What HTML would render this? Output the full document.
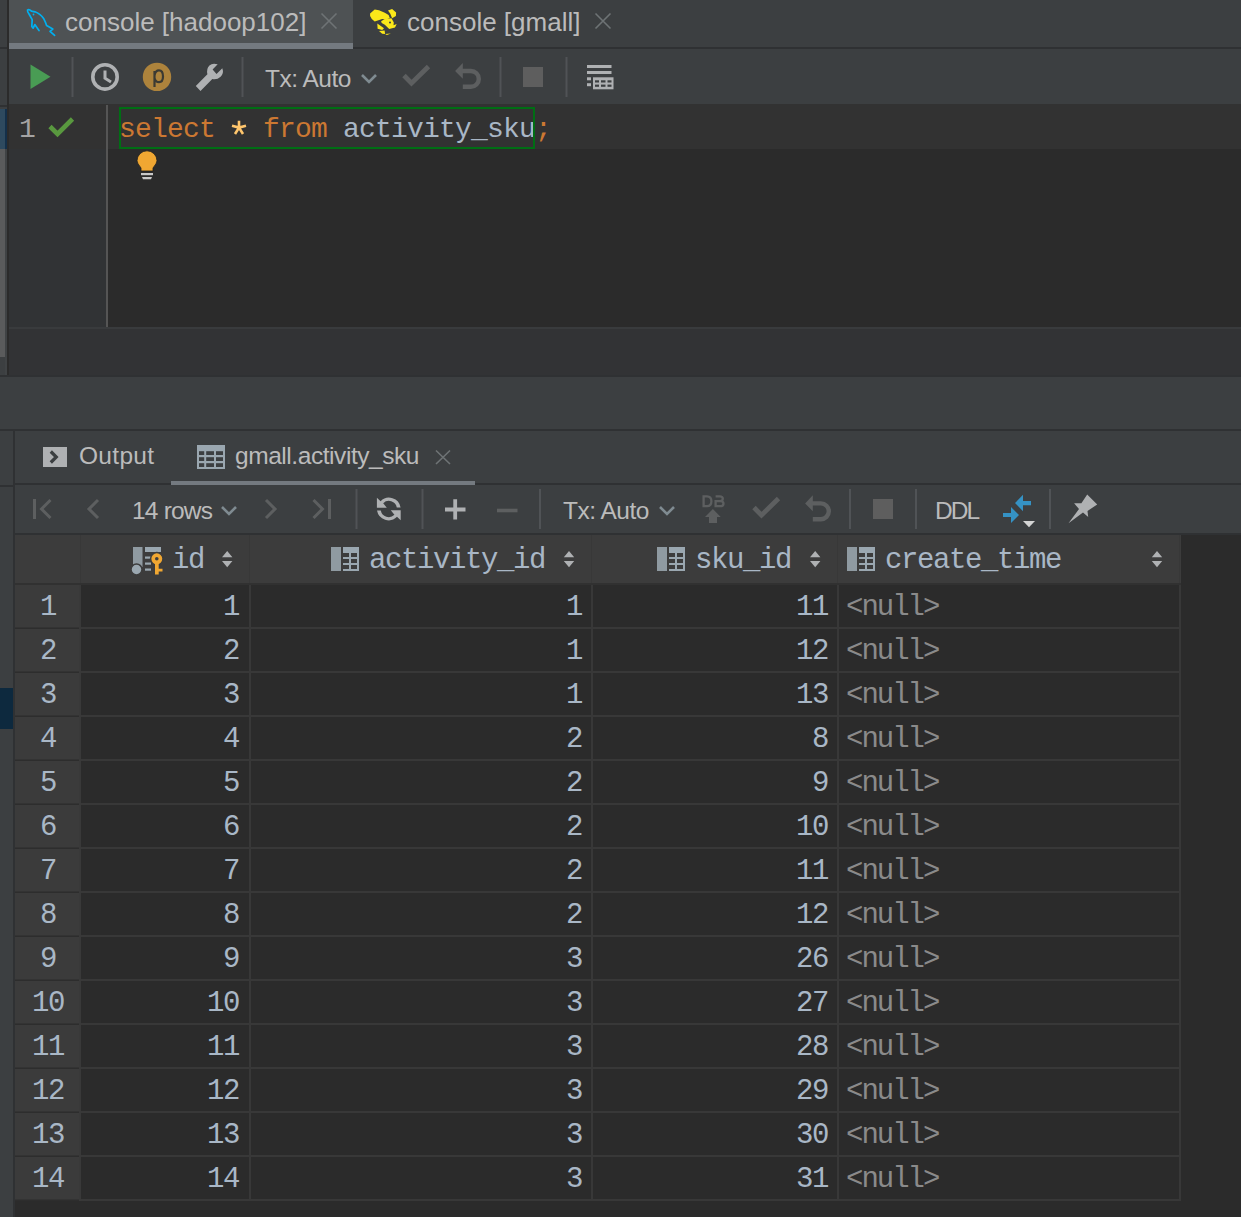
<!DOCTYPE html>
<html><head><meta charset="utf-8">
<style>
*{margin:0;padding:0;box-sizing:border-box}
html,body{width:1241px;height:1217px;overflow:hidden;background:#2b2b2b}
body{position:relative;font-family:"Liberation Sans",sans-serif;color:#bbbbbb}
.a{position:absolute}
.sans{font-family:"Liberation Sans",sans-serif;white-space:pre}
.mono{font-family:"Liberation Mono",monospace;white-space:pre}
.sep{position:absolute;width:2px;background:#515456}
</style></head><body>

<!-- ===== top tab bar ===== -->
<div class="a" style="left:0;top:0;width:1241px;height:50px;background:#3c3f41"></div>
<div class="a" style="left:9px;top:0;width:344px;height:43px;background:#4e5254"></div>
<div class="a" style="left:9px;top:43px;width:344px;height:6px;background:#747a80"></div>
<div class="a" style="left:353px;top:47px;width:888px;height:2px;background:#2f3133"></div>
<div class="a" style="left:0;top:47px;width:7px;height:2px;background:#2f3133"></div>
<div class="a" style="left:7px;top:0;width:2px;height:377px;background:#2b2b2b"></div>

<!-- ===== toolbar ===== -->
<div class="a" style="left:9px;top:49px;width:1232px;height:56px;background:#3c3f41"></div>
<div class="a" style="left:9px;top:104px;width:1232px;height:1px;background:#323232"></div>

<!-- ===== editor ===== -->
<div class="a" style="left:9px;top:105px;width:97px;height:222px;background:#313335"></div>
<div class="a" style="left:108px;top:105px;width:1133px;height:222px;background:#2b2b2b"></div>
<div class="a" style="left:9px;top:105px;width:1232px;height:44px;background:#323232"></div>
<div class="a" style="left:106px;top:105px;width:2px;height:222px;background:#555555"></div>
<!-- left strip markers -->
<div class="a" style="left:0;top:49px;width:7px;height:328px;background:#3c3f41"></div>
<div class="a" style="left:0;top:105px;width:7px;height:2px;background:#2f3133"></div>
<div class="a" style="left:0;top:109px;width:5px;height:40px;background:#2e4a5f"></div>
<div class="a" style="left:5px;top:109px;width:2px;height:40px;background:#14304a"></div>
<div class="a" style="left:0;top:149px;width:5px;height:208px;background:#5a5b5c"></div>
<div class="a" style="left:5px;top:149px;width:2px;height:226px;background:#404345"></div>

<div class="a" style="left:9px;top:327px;width:1232px;height:2px;background:#393b3d"></div>
<div class="a" style="left:9px;top:329px;width:1232px;height:46px;background:#323335"></div>
<div class="a" style="left:0;top:375px;width:1241px;height:2px;background:#2f3133"></div>

<!-- ===== panel gap ===== -->
<div class="a" style="left:0;top:377px;width:1241px;height:52px;background:#3c3f41"></div>
<div class="a" style="left:0;top:429px;width:1241px;height:2px;background:#2f3133"></div>

<!-- ===== results ===== -->
<div class="a" style="left:0;top:431px;width:1241px;height:104px;background:#3c3f41"></div>
<div class="a" style="left:13px;top:431px;width:2px;height:786px;background:#2f3133"></div>
<div class="a" style="left:0;top:431px;width:13px;height:786px;background:#3c3f41"></div>
<div class="a" style="left:0;top:688px;width:13px;height:41px;background:#0d293e"></div>
<div class="a" style="left:0;top:485px;width:13px;height:2px;background:#2f3133"></div>
<div class="a" style="left:15px;top:483px;width:156px;height:2px;background:#2f3133"></div>
<div class="a" style="left:171px;top:481px;width:304px;height:4px;background:#747a80"></div>
<div class="a" style="left:475px;top:483px;width:766px;height:2px;background:#2f3133"></div>
<div class="a" style="left:15px;top:533px;width:1226px;height:2px;background:#2f3133"></div>

<!-- table -->
<div class="a" style="left:15px;top:535px;width:1226px;height:682px;background:#2b2b2b"></div>

<div class="a" style="left:15px;top:535px;width:1166px;height:48px;background:#3c3c3c"></div>
<div class="a" style="left:15px;top:585px;width:66px;height:616px;background:#3b3b3b"></div>
<div class="a" style="left:15px;top:583px;width:1166px;height:2px;background:#313131"></div>
<div class="a" style="left:81px;top:627px;width:1100px;height:2px;background:#383838"></div>
<div class="a" style="left:15px;top:627px;width:66px;height:2px;background:#333333"></div>
<div class="a" style="left:15px;top:627.5px;width:66px;height:1px;background:#2d2d2d"></div>
<div class="a" style="left:81px;top:671px;width:1100px;height:2px;background:#383838"></div>
<div class="a" style="left:15px;top:671px;width:66px;height:2px;background:#333333"></div>
<div class="a" style="left:15px;top:671.5px;width:66px;height:1px;background:#2d2d2d"></div>
<div class="a" style="left:81px;top:715px;width:1100px;height:2px;background:#383838"></div>
<div class="a" style="left:15px;top:715px;width:66px;height:2px;background:#333333"></div>
<div class="a" style="left:15px;top:715.5px;width:66px;height:1px;background:#2d2d2d"></div>
<div class="a" style="left:81px;top:759px;width:1100px;height:2px;background:#383838"></div>
<div class="a" style="left:15px;top:759px;width:66px;height:2px;background:#333333"></div>
<div class="a" style="left:15px;top:759.5px;width:66px;height:1px;background:#2d2d2d"></div>
<div class="a" style="left:81px;top:803px;width:1100px;height:2px;background:#383838"></div>
<div class="a" style="left:15px;top:803px;width:66px;height:2px;background:#333333"></div>
<div class="a" style="left:15px;top:803.5px;width:66px;height:1px;background:#2d2d2d"></div>
<div class="a" style="left:81px;top:847px;width:1100px;height:2px;background:#383838"></div>
<div class="a" style="left:15px;top:847px;width:66px;height:2px;background:#333333"></div>
<div class="a" style="left:15px;top:847.5px;width:66px;height:1px;background:#2d2d2d"></div>
<div class="a" style="left:81px;top:891px;width:1100px;height:2px;background:#383838"></div>
<div class="a" style="left:15px;top:891px;width:66px;height:2px;background:#333333"></div>
<div class="a" style="left:15px;top:891.5px;width:66px;height:1px;background:#2d2d2d"></div>
<div class="a" style="left:81px;top:935px;width:1100px;height:2px;background:#383838"></div>
<div class="a" style="left:15px;top:935px;width:66px;height:2px;background:#333333"></div>
<div class="a" style="left:15px;top:935.5px;width:66px;height:1px;background:#2d2d2d"></div>
<div class="a" style="left:81px;top:979px;width:1100px;height:2px;background:#383838"></div>
<div class="a" style="left:15px;top:979px;width:66px;height:2px;background:#333333"></div>
<div class="a" style="left:15px;top:979.5px;width:66px;height:1px;background:#2d2d2d"></div>
<div class="a" style="left:81px;top:1023px;width:1100px;height:2px;background:#383838"></div>
<div class="a" style="left:15px;top:1023px;width:66px;height:2px;background:#333333"></div>
<div class="a" style="left:15px;top:1023.5px;width:66px;height:1px;background:#2d2d2d"></div>
<div class="a" style="left:81px;top:1067px;width:1100px;height:2px;background:#383838"></div>
<div class="a" style="left:15px;top:1067px;width:66px;height:2px;background:#333333"></div>
<div class="a" style="left:15px;top:1067.5px;width:66px;height:1px;background:#2d2d2d"></div>
<div class="a" style="left:81px;top:1111px;width:1100px;height:2px;background:#383838"></div>
<div class="a" style="left:15px;top:1111px;width:66px;height:2px;background:#333333"></div>
<div class="a" style="left:15px;top:1111.5px;width:66px;height:1px;background:#2d2d2d"></div>
<div class="a" style="left:81px;top:1155px;width:1100px;height:2px;background:#383838"></div>
<div class="a" style="left:15px;top:1155px;width:66px;height:2px;background:#333333"></div>
<div class="a" style="left:15px;top:1155.5px;width:66px;height:1px;background:#2d2d2d"></div>
<div class="a" style="left:81px;top:1199px;width:1100px;height:2px;background:#383838"></div>
<div class="a" style="left:15px;top:1199px;width:66px;height:2px;background:#333333"></div>
<div class="a" style="left:15px;top:1199.5px;width:66px;height:1px;background:#2d2d2d"></div>
<div class="a" style="left:249px;top:585px;width:2px;height:616px;background:#383838"></div>
<div class="a" style="left:591px;top:585px;width:2px;height:616px;background:#383838"></div>
<div class="a" style="left:837px;top:585px;width:2px;height:616px;background:#383838"></div>
<div class="a" style="left:1179px;top:585px;width:2px;height:616px;background:#383838"></div>
<div class="a" style="left:79px;top:585px;width:2px;height:616px;background:#393939"></div>
<div class="a" style="left:80px;top:535px;width:1px;height:48px;background:#383838"></div>
<div class="a" style="left:249px;top:535px;width:1px;height:48px;background:#383838"></div>
<div class="a" style="left:591px;top:535px;width:1px;height:48px;background:#383838"></div>
<div class="a" style="left:837px;top:535px;width:1px;height:48px;background:#383838"></div>
<div class="a" style="left:1179px;top:535px;width:1px;height:48px;background:#383838"></div>
<div class="a mono" style="left:15px;top:588.27px;width:66px;text-align:center;font-size:29px;letter-spacing:-1.4px;line-height:40px;color:#a9b7c6">1</div>
<div class="a mono" style="left:81px;top:588.27px;width:158px;text-align:right;font-size:29px;letter-spacing:-1.4px;line-height:40px;color:#a9b7c6">1</div>
<div class="a mono" style="left:251px;top:588.27px;width:331px;text-align:right;font-size:29px;letter-spacing:-1.4px;line-height:40px;color:#a9b7c6">1</div>
<div class="a mono" style="left:593px;top:588.27px;width:235px;text-align:right;font-size:29px;letter-spacing:-1.4px;line-height:40px;color:#a9b7c6">11</div>
<div class="a mono" style="left:846px;top:588.27px;width:300px;font-size:29px;letter-spacing:-1.4px;line-height:40px;color:#a9b7c6;letter-spacing:-2px;color:#8a8a8a">&lt;null&gt;</div>
<div class="a mono" style="left:15px;top:632.27px;width:66px;text-align:center;font-size:29px;letter-spacing:-1.4px;line-height:40px;color:#a9b7c6">2</div>
<div class="a mono" style="left:81px;top:632.27px;width:158px;text-align:right;font-size:29px;letter-spacing:-1.4px;line-height:40px;color:#a9b7c6">2</div>
<div class="a mono" style="left:251px;top:632.27px;width:331px;text-align:right;font-size:29px;letter-spacing:-1.4px;line-height:40px;color:#a9b7c6">1</div>
<div class="a mono" style="left:593px;top:632.27px;width:235px;text-align:right;font-size:29px;letter-spacing:-1.4px;line-height:40px;color:#a9b7c6">12</div>
<div class="a mono" style="left:846px;top:632.27px;width:300px;font-size:29px;letter-spacing:-1.4px;line-height:40px;color:#a9b7c6;letter-spacing:-2px;color:#8a8a8a">&lt;null&gt;</div>
<div class="a mono" style="left:15px;top:676.27px;width:66px;text-align:center;font-size:29px;letter-spacing:-1.4px;line-height:40px;color:#a9b7c6">3</div>
<div class="a mono" style="left:81px;top:676.27px;width:158px;text-align:right;font-size:29px;letter-spacing:-1.4px;line-height:40px;color:#a9b7c6">3</div>
<div class="a mono" style="left:251px;top:676.27px;width:331px;text-align:right;font-size:29px;letter-spacing:-1.4px;line-height:40px;color:#a9b7c6">1</div>
<div class="a mono" style="left:593px;top:676.27px;width:235px;text-align:right;font-size:29px;letter-spacing:-1.4px;line-height:40px;color:#a9b7c6">13</div>
<div class="a mono" style="left:846px;top:676.27px;width:300px;font-size:29px;letter-spacing:-1.4px;line-height:40px;color:#a9b7c6;letter-spacing:-2px;color:#8a8a8a">&lt;null&gt;</div>
<div class="a mono" style="left:15px;top:720.27px;width:66px;text-align:center;font-size:29px;letter-spacing:-1.4px;line-height:40px;color:#a9b7c6">4</div>
<div class="a mono" style="left:81px;top:720.27px;width:158px;text-align:right;font-size:29px;letter-spacing:-1.4px;line-height:40px;color:#a9b7c6">4</div>
<div class="a mono" style="left:251px;top:720.27px;width:331px;text-align:right;font-size:29px;letter-spacing:-1.4px;line-height:40px;color:#a9b7c6">2</div>
<div class="a mono" style="left:593px;top:720.27px;width:235px;text-align:right;font-size:29px;letter-spacing:-1.4px;line-height:40px;color:#a9b7c6">8</div>
<div class="a mono" style="left:846px;top:720.27px;width:300px;font-size:29px;letter-spacing:-1.4px;line-height:40px;color:#a9b7c6;letter-spacing:-2px;color:#8a8a8a">&lt;null&gt;</div>
<div class="a mono" style="left:15px;top:764.27px;width:66px;text-align:center;font-size:29px;letter-spacing:-1.4px;line-height:40px;color:#a9b7c6">5</div>
<div class="a mono" style="left:81px;top:764.27px;width:158px;text-align:right;font-size:29px;letter-spacing:-1.4px;line-height:40px;color:#a9b7c6">5</div>
<div class="a mono" style="left:251px;top:764.27px;width:331px;text-align:right;font-size:29px;letter-spacing:-1.4px;line-height:40px;color:#a9b7c6">2</div>
<div class="a mono" style="left:593px;top:764.27px;width:235px;text-align:right;font-size:29px;letter-spacing:-1.4px;line-height:40px;color:#a9b7c6">9</div>
<div class="a mono" style="left:846px;top:764.27px;width:300px;font-size:29px;letter-spacing:-1.4px;line-height:40px;color:#a9b7c6;letter-spacing:-2px;color:#8a8a8a">&lt;null&gt;</div>
<div class="a mono" style="left:15px;top:808.27px;width:66px;text-align:center;font-size:29px;letter-spacing:-1.4px;line-height:40px;color:#a9b7c6">6</div>
<div class="a mono" style="left:81px;top:808.27px;width:158px;text-align:right;font-size:29px;letter-spacing:-1.4px;line-height:40px;color:#a9b7c6">6</div>
<div class="a mono" style="left:251px;top:808.27px;width:331px;text-align:right;font-size:29px;letter-spacing:-1.4px;line-height:40px;color:#a9b7c6">2</div>
<div class="a mono" style="left:593px;top:808.27px;width:235px;text-align:right;font-size:29px;letter-spacing:-1.4px;line-height:40px;color:#a9b7c6">10</div>
<div class="a mono" style="left:846px;top:808.27px;width:300px;font-size:29px;letter-spacing:-1.4px;line-height:40px;color:#a9b7c6;letter-spacing:-2px;color:#8a8a8a">&lt;null&gt;</div>
<div class="a mono" style="left:15px;top:852.27px;width:66px;text-align:center;font-size:29px;letter-spacing:-1.4px;line-height:40px;color:#a9b7c6">7</div>
<div class="a mono" style="left:81px;top:852.27px;width:158px;text-align:right;font-size:29px;letter-spacing:-1.4px;line-height:40px;color:#a9b7c6">7</div>
<div class="a mono" style="left:251px;top:852.27px;width:331px;text-align:right;font-size:29px;letter-spacing:-1.4px;line-height:40px;color:#a9b7c6">2</div>
<div class="a mono" style="left:593px;top:852.27px;width:235px;text-align:right;font-size:29px;letter-spacing:-1.4px;line-height:40px;color:#a9b7c6">11</div>
<div class="a mono" style="left:846px;top:852.27px;width:300px;font-size:29px;letter-spacing:-1.4px;line-height:40px;color:#a9b7c6;letter-spacing:-2px;color:#8a8a8a">&lt;null&gt;</div>
<div class="a mono" style="left:15px;top:896.27px;width:66px;text-align:center;font-size:29px;letter-spacing:-1.4px;line-height:40px;color:#a9b7c6">8</div>
<div class="a mono" style="left:81px;top:896.27px;width:158px;text-align:right;font-size:29px;letter-spacing:-1.4px;line-height:40px;color:#a9b7c6">8</div>
<div class="a mono" style="left:251px;top:896.27px;width:331px;text-align:right;font-size:29px;letter-spacing:-1.4px;line-height:40px;color:#a9b7c6">2</div>
<div class="a mono" style="left:593px;top:896.27px;width:235px;text-align:right;font-size:29px;letter-spacing:-1.4px;line-height:40px;color:#a9b7c6">12</div>
<div class="a mono" style="left:846px;top:896.27px;width:300px;font-size:29px;letter-spacing:-1.4px;line-height:40px;color:#a9b7c6;letter-spacing:-2px;color:#8a8a8a">&lt;null&gt;</div>
<div class="a mono" style="left:15px;top:940.27px;width:66px;text-align:center;font-size:29px;letter-spacing:-1.4px;line-height:40px;color:#a9b7c6">9</div>
<div class="a mono" style="left:81px;top:940.27px;width:158px;text-align:right;font-size:29px;letter-spacing:-1.4px;line-height:40px;color:#a9b7c6">9</div>
<div class="a mono" style="left:251px;top:940.27px;width:331px;text-align:right;font-size:29px;letter-spacing:-1.4px;line-height:40px;color:#a9b7c6">3</div>
<div class="a mono" style="left:593px;top:940.27px;width:235px;text-align:right;font-size:29px;letter-spacing:-1.4px;line-height:40px;color:#a9b7c6">26</div>
<div class="a mono" style="left:846px;top:940.27px;width:300px;font-size:29px;letter-spacing:-1.4px;line-height:40px;color:#a9b7c6;letter-spacing:-2px;color:#8a8a8a">&lt;null&gt;</div>
<div class="a mono" style="left:15px;top:984.27px;width:66px;text-align:center;font-size:29px;letter-spacing:-1.4px;line-height:40px;color:#a9b7c6">10</div>
<div class="a mono" style="left:81px;top:984.27px;width:158px;text-align:right;font-size:29px;letter-spacing:-1.4px;line-height:40px;color:#a9b7c6">10</div>
<div class="a mono" style="left:251px;top:984.27px;width:331px;text-align:right;font-size:29px;letter-spacing:-1.4px;line-height:40px;color:#a9b7c6">3</div>
<div class="a mono" style="left:593px;top:984.27px;width:235px;text-align:right;font-size:29px;letter-spacing:-1.4px;line-height:40px;color:#a9b7c6">27</div>
<div class="a mono" style="left:846px;top:984.27px;width:300px;font-size:29px;letter-spacing:-1.4px;line-height:40px;color:#a9b7c6;letter-spacing:-2px;color:#8a8a8a">&lt;null&gt;</div>
<div class="a mono" style="left:15px;top:1028.27px;width:66px;text-align:center;font-size:29px;letter-spacing:-1.4px;line-height:40px;color:#a9b7c6">11</div>
<div class="a mono" style="left:81px;top:1028.27px;width:158px;text-align:right;font-size:29px;letter-spacing:-1.4px;line-height:40px;color:#a9b7c6">11</div>
<div class="a mono" style="left:251px;top:1028.27px;width:331px;text-align:right;font-size:29px;letter-spacing:-1.4px;line-height:40px;color:#a9b7c6">3</div>
<div class="a mono" style="left:593px;top:1028.27px;width:235px;text-align:right;font-size:29px;letter-spacing:-1.4px;line-height:40px;color:#a9b7c6">28</div>
<div class="a mono" style="left:846px;top:1028.27px;width:300px;font-size:29px;letter-spacing:-1.4px;line-height:40px;color:#a9b7c6;letter-spacing:-2px;color:#8a8a8a">&lt;null&gt;</div>
<div class="a mono" style="left:15px;top:1072.27px;width:66px;text-align:center;font-size:29px;letter-spacing:-1.4px;line-height:40px;color:#a9b7c6">12</div>
<div class="a mono" style="left:81px;top:1072.27px;width:158px;text-align:right;font-size:29px;letter-spacing:-1.4px;line-height:40px;color:#a9b7c6">12</div>
<div class="a mono" style="left:251px;top:1072.27px;width:331px;text-align:right;font-size:29px;letter-spacing:-1.4px;line-height:40px;color:#a9b7c6">3</div>
<div class="a mono" style="left:593px;top:1072.27px;width:235px;text-align:right;font-size:29px;letter-spacing:-1.4px;line-height:40px;color:#a9b7c6">29</div>
<div class="a mono" style="left:846px;top:1072.27px;width:300px;font-size:29px;letter-spacing:-1.4px;line-height:40px;color:#a9b7c6;letter-spacing:-2px;color:#8a8a8a">&lt;null&gt;</div>
<div class="a mono" style="left:15px;top:1116.27px;width:66px;text-align:center;font-size:29px;letter-spacing:-1.4px;line-height:40px;color:#a9b7c6">13</div>
<div class="a mono" style="left:81px;top:1116.27px;width:158px;text-align:right;font-size:29px;letter-spacing:-1.4px;line-height:40px;color:#a9b7c6">13</div>
<div class="a mono" style="left:251px;top:1116.27px;width:331px;text-align:right;font-size:29px;letter-spacing:-1.4px;line-height:40px;color:#a9b7c6">3</div>
<div class="a mono" style="left:593px;top:1116.27px;width:235px;text-align:right;font-size:29px;letter-spacing:-1.4px;line-height:40px;color:#a9b7c6">30</div>
<div class="a mono" style="left:846px;top:1116.27px;width:300px;font-size:29px;letter-spacing:-1.4px;line-height:40px;color:#a9b7c6;letter-spacing:-2px;color:#8a8a8a">&lt;null&gt;</div>
<div class="a mono" style="left:15px;top:1160.27px;width:66px;text-align:center;font-size:29px;letter-spacing:-1.4px;line-height:40px;color:#a9b7c6">14</div>
<div class="a mono" style="left:81px;top:1160.27px;width:158px;text-align:right;font-size:29px;letter-spacing:-1.4px;line-height:40px;color:#a9b7c6">14</div>
<div class="a mono" style="left:251px;top:1160.27px;width:331px;text-align:right;font-size:29px;letter-spacing:-1.4px;line-height:40px;color:#a9b7c6">3</div>
<div class="a mono" style="left:593px;top:1160.27px;width:235px;text-align:right;font-size:29px;letter-spacing:-1.4px;line-height:40px;color:#a9b7c6">31</div>
<div class="a mono" style="left:846px;top:1160.27px;width:300px;font-size:29px;letter-spacing:-1.4px;line-height:40px;color:#a9b7c6;letter-spacing:-2px;color:#8a8a8a">&lt;null&gt;</div>
<div class="a sans" style="left:65px;top:1.69px;font-size:26px;line-height:40px;letter-spacing:0px;color:#bbbbbb;">console [hadoop102]</div>
<div class="a sans" style="left:407px;top:1.69px;font-size:26px;line-height:40px;letter-spacing:0px;color:#bbbbbb;">console [gmall]</div>
<div class="a sans" style="left:265px;top:58.51px;font-size:24.5px;line-height:40px;letter-spacing:-0.5px;color:#bbbbbb;">Tx: Auto</div>
<div class="a sans" style="left:79px;top:435.81px;font-size:24.5px;line-height:40px;letter-spacing:0.3px;color:#bbbbbb;">Output</div>
<div class="a sans" style="left:235px;top:435.91px;font-size:24.5px;line-height:40px;letter-spacing:-0.44px;color:#bbbbbb;">gmall.activity_sku</div>
<div class="a sans" style="left:132px;top:490.51px;font-size:24.5px;line-height:40px;letter-spacing:-0.8px;color:#bbbbbb;">14 rows</div>
<div class="a sans" style="left:563px;top:490.51px;font-size:24.5px;line-height:40px;letter-spacing:-0.5px;color:#bbbbbb;">Tx: Auto</div>
<div class="a sans" style="left:935px;top:490.51px;font-size:24.5px;line-height:40px;letter-spacing:-2px;color:#bbbbbb;">DDL</div>
<div class="a mono" style="left:19px;top:109.54px;font-size:28px;line-height:40px;letter-spacing:0px;color:#a4a3a3;">1</div>
<div class="a mono" style="left:119px;top:109.54px;font-size:28px;line-height:40px;letter-spacing:-0.8px;color:#a9b7c6;"><span style="color:#cc7832">select</span>   <span style="color:#cc7832">from</span> activity_sku<span style="color:#cc7832">;</span></div>
<div class="a mono" style="left:172px;top:540.77px;font-size:29px;line-height:40px;letter-spacing:-1.4px;color:#a9b7c6;">id</div>
<div class="a mono" style="left:369px;top:540.77px;font-size:29px;line-height:40px;letter-spacing:-1.4px;color:#a9b7c6;">activity_id</div>
<div class="a mono" style="left:695px;top:540.77px;font-size:29px;line-height:40px;letter-spacing:-1.4px;color:#a9b7c6;">sku_id</div>
<div class="a mono" style="left:885px;top:540.77px;font-size:29px;line-height:40px;letter-spacing:-1.4px;color:#a9b7c6;">create_time</div>
<svg class="a" style="left:0;top:0" width="1241" height="1217" viewBox="0 0 1241 1217"><path d="M321.5 13.5 L336.5 28.5 M336.5 13.5 L321.5 28.5" stroke="#6e7375" stroke-width="1.6" fill="none"/><path d="M595.5 13.5 L610.5 28.5 M610.5 13.5 L595.5 28.5" stroke="#6e7375" stroke-width="1.6" fill="none"/><path d="M27.5 10 Q29 8.6 31.5 11.2 L35 11.8 Q40 13.5 43.8 18.8 Q45.6 22 46.6 25.6 L52.8 29 L50 31.3 L54.6 35.4 M27.5 10 Q27.2 11.5 29 14 L32.2 19.6 L31.8 26.5 L33.2 28.2 L34.8 24.6 L39 30.5" stroke="#00b0f0" stroke-width="1.7" fill="none" stroke-linejoin="round" stroke-linecap="round"/><circle cx="33.5" cy="14.5" r="0.9" fill="#00b0f0"/><g fill="#fbe81a"><path d="M370.1 13.4 L374.7 9.6 L379 10.2 L384.8 12.8 L388.6 14.9 L389.8 18 L386.3 19.5 L382.2 18.9 L374.7 21.5 L371.8 18.9 L370.1 16 Z"/><path d="M388 10.5 L392.1 9.1 L396.1 12.5 L395.9 16 L392.1 18.3 L390.3 13.7 Z"/><path d="M381.1 21.2 L384.8 18.9 L391.5 18.3 L393.8 22.4 L393.5 25.3 L396.7 24.1 L395 27.6 L389.2 29 L384.8 24.7 L381.7 23 Z"/><path d="M377.3 23.6 L384 28.2 L382.2 29.9 L377.6 28.8 Z"/><path d="M379 31.1 L384.6 30.5 L385.1 34 L382.2 33.7 Z"/><path d="M385.1 34 L390.9 33.4 L386.9 34.9 Z"/></g><circle cx="390" cy="22.4" r="1" fill="#3c3f41"/><path d="M30.5 64.5 L50.5 76.8 L30.5 89 Z" fill="#499c54"/><rect x="71.5" y="57" width="2" height="40" fill="#505356"/><rect x="241.5" y="57" width="2" height="40" fill="#505356"/><rect x="499.5" y="57" width="2" height="40" fill="#505356"/><rect x="565.5" y="57" width="2" height="40" fill="#505356"/><circle cx="105" cy="76.9" r="12.2" stroke="#afb1b3" stroke-width="3.6" fill="none"/><path d="M105 70.5 L105 78.2 L111 82" stroke="#afb1b3" stroke-width="3" fill="none"/><circle cx="157" cy="76.9" r="14.2" fill="#ad833c"/><path d="M154.5 71 L154.5 87 M154.5 75.5 Q155.5 70.4 159 70.4 Q163 70.4 163 76.6 Q163 82.2 159 82.2 Q155.5 82.2 154.5 78" stroke="#3b3a33" stroke-width="2.2" fill="none"/><path d="M195.8 86.1 L207.4 74.3 Q206.2 68.5 209.4 65.4 Q212.5 62.6 217.7 64.3 L212.6 69.6 L216.5 74 L222.3 68.3 Q224.2 73.2 220.6 76.7 Q217 80 212.3 79 L200.5 90.9 Z" fill="#afb1b3"/><path d="M362 75 L369 82 L376 75" stroke="#7f8b91" stroke-width="2.6" fill="none"/><path d="M404 75.5 L411.5 83.2 L428.5 66.5" stroke="#5d5f60" stroke-width="4.8" fill="none"/><path d="M455.1 71 L462.8 62.9 L462.8 78.8 Z" fill="#5d5f60"/><path d="M461.5 71 L470.9 71 A7.9 7.9 0 0 1 470.9 86.8 L462.8 86.8" stroke="#5d5f60" stroke-width="4.4" fill="none"/><rect x="523" y="67" width="20" height="20" fill="#5e5e5e"/><g fill="#afb1b3"><rect x="587" y="65" width="24.5" height="3"/><rect x="587" y="71" width="24.5" height="3"/><rect x="587" y="77.3" width="4" height="3"/><rect x="587" y="83.2" width="4" height="3"/><rect x="593" y="77.3" width="20.5" height="12"/></g><g fill="#3c3f41"><rect x="595" y="80.3" width="4" height="2.2"/><rect x="601" y="80.3" width="4.5" height="2.2"/><rect x="607.5" y="80.3" width="4" height="2.2"/><rect x="595" y="84.6" width="4" height="2.2"/><rect x="601" y="84.6" width="4.5" height="2.2"/><rect x="607.5" y="84.6" width="4" height="2.2"/></g><path d="M239 120.8 L239 127.6 M232 125.8 L239 127.6 L246 125.8 M235 134 L239 127.6 L243 134" stroke="#ffc66d" stroke-width="2.6" fill="none"/><path d="M50 126.5 L57.5 134 L72.5 119" stroke="#59983f" stroke-width="4.6" fill="none"/><rect x="120" y="108" width="414" height="40" stroke="#006e14" stroke-width="2" fill="none"/><path d="M141 171 L141 168 Q137 163 137 160.8 A10 10 0 1 1 157 160.8 Q157 163 153 168 L153 171 Z" fill="#f0a732" stroke="#1f1f1f" stroke-width="0.8"/><rect x="141" y="173" width="12" height="2.2" fill="#c9c9c9"/><path d="M142 177 L152 177 L151 179.2 L143 179.2 Z" fill="#c9c9c9"/><rect x="43" y="447" width="24" height="20" fill="#afb1b3"/><path d="M50.8 451.5 L56.3 457 L50.8 462.5" stroke="#3c3f41" stroke-width="3.2" fill="none"/><rect x="197" y="445" width="28" height="24" fill="#9aa7b0"/><g fill="#3c3f41"><rect x="199" y="451.2" width="5.2" height="3.8"/><rect x="206.2" y="451.2" width="7.8" height="3.8"/><rect x="216" y="451.2" width="7" height="3.8"/><rect x="199" y="457.2" width="5.2" height="3.8"/><rect x="206.2" y="457.2" width="7.8" height="3.8"/><rect x="216" y="457.2" width="7" height="3.8"/><rect x="199" y="463.2" width="5.2" height="3.8"/><rect x="206.2" y="463.2" width="7.8" height="3.8"/><rect x="216" y="463.2" width="7" height="3.8"/></g><path d="M436 450.5 L450 464 M450 450.5 L436 464" stroke="#6e7375" stroke-width="1.6" fill="none"/><rect x="355.5" y="489" width="2" height="40" fill="#505356"/><rect x="421.5" y="489" width="2" height="40" fill="#505356"/><rect x="539" y="489" width="2" height="40" fill="#505356"/><rect x="849" y="489" width="2" height="40" fill="#505356"/><rect x="915" y="489" width="2" height="40" fill="#505356"/><rect x="1049" y="489" width="2" height="40" fill="#505356"/><rect x="33" y="499" width="3" height="20" fill="#5d5f60"/><path d="M50.5 500 L41.5 509 L50.5 518" stroke="#5d5f60" stroke-width="3" fill="none"/><path d="M98 500 L89 509 L98 518" stroke="#5d5f60" stroke-width="3" fill="none"/><path d="M222 507 L229 514 L236 507" stroke="#7f8b91" stroke-width="2.6" fill="none"/><path d="M266 500 L275 509 L266 518" stroke="#5d5f60" stroke-width="3" fill="none"/><path d="M313.5 500 L322.5 509 L313.5 518" stroke="#5d5f60" stroke-width="3" fill="none"/><rect x="328" y="499" width="3" height="20" fill="#5d5f60"/><path d="M376.9 497.7 L380.6 501.2 A11.8 11.8 0 0 1 400.6 507.4 L396.8 507.4 A8 8 0 0 0 383.2 503.3 L386.8 507.8 L376.9 507.8 Z M400.7 520.3 L397 516.8 A11.8 11.8 0 0 1 377 510.6 L380.8 510.6 A8 8 0 0 0 394.4 514.7 L390.8 510.2 L400.7 510.2 Z" fill="#afb1b3"/><path d="M445 509.5 L465.5 509.5 M455.2 499.3 L455.2 519.6" stroke="#afb1b3" stroke-width="3.8" fill="none"/><path d="M497 510.5 L517.5 510.5" stroke="#5d5f60" stroke-width="3.6" fill="none"/><path d="M660 507 L667 514 L674 507" stroke="#7f8b91" stroke-width="2.6" fill="none"/><path d="M703.6 496.4 L707 496.4 Q711.4 496.4 711.4 501.25 Q711.4 506.1 707 506.1 L703.6 506.1 Z M715.6 496.4 L719.6 496.4 Q722.8 496.4 722.8 498.8 Q722.8 501.2 719.6 501.2 L715.6 501.2 M715.6 501.2 L720.1 501.2 Q723.5 501.2 723.5 503.65 Q723.5 506.1 720.1 506.1 L715.6 506.1 Z" stroke="#5d5f60" stroke-width="2.3" fill="none"/><path d="M705 517 L712.9 509 L720.7 517 L717 517 L717 523 L709 523 L709 517 Z" fill="#5d5f60"/><path d="M754 507.5 L761.5 515.2 L778.5 498.5" stroke="#5d5f60" stroke-width="4.8" fill="none"/><path d="M805.1 503.4 L812.8 495.29999999999995 L812.8 511.2 Z" fill="#5d5f60"/><path d="M811.5 503.4 L820.9 503.4 A7.9 7.9 0 0 1 820.9 519.1999999999999 L812.8 519.1999999999999" stroke="#5d5f60" stroke-width="4.4" fill="none"/><rect x="873" y="499" width="20" height="20" fill="#5e5e5e"/><path d="M1015 503 L1023 494.8 L1023 501 L1031 501 L1031 505.2 L1023 505.2 L1023 511.2 Z" fill="#3592c4"/><path d="M1019 515 L1011 507 L1011 513 L1003 513 L1003 517 L1011 517 L1011 523 Z" fill="#3592c4"/><path d="M1023 521 L1035 521 L1029 527.2 Z" fill="#d4d4d4"/><path d="M1087.2 494.6 L1097.2 504.4 L1087.5 511 L1088.2 517 L1083 512.5 L1068.5 523.3 L1079 509 L1074.1 503.3 L1081.4 503.3 Z" fill="#afb1b3"/><rect x="331" y="547" width="10" height="24" fill="#8f9aa1"/><rect x="343" y="547" width="16" height="24" fill="#9aa7b0"/><rect x="343" y="553" width="6" height="4" fill="#3c3c3c"/><rect x="351" y="553" width="6" height="4" fill="#3c3c3c"/><rect x="343" y="559" width="6" height="4" fill="#3c3c3c"/><rect x="351" y="559" width="6" height="4" fill="#3c3c3c"/><rect x="343" y="565" width="6" height="4" fill="#3c3c3c"/><rect x="351" y="565" width="6" height="4" fill="#3c3c3c"/><rect x="657" y="547" width="10" height="24" fill="#8f9aa1"/><rect x="669" y="547" width="16" height="24" fill="#9aa7b0"/><rect x="669" y="553" width="6" height="4" fill="#3c3c3c"/><rect x="677" y="553" width="6" height="4" fill="#3c3c3c"/><rect x="669" y="559" width="6" height="4" fill="#3c3c3c"/><rect x="677" y="559" width="6" height="4" fill="#3c3c3c"/><rect x="669" y="565" width="6" height="4" fill="#3c3c3c"/><rect x="677" y="565" width="6" height="4" fill="#3c3c3c"/><rect x="847" y="547" width="10" height="24" fill="#8f9aa1"/><rect x="859" y="547" width="16" height="24" fill="#9aa7b0"/><rect x="859" y="553" width="6" height="4" fill="#3c3c3c"/><rect x="867" y="553" width="6" height="4" fill="#3c3c3c"/><rect x="859" y="559" width="6" height="4" fill="#3c3c3c"/><rect x="867" y="559" width="6" height="4" fill="#3c3c3c"/><rect x="859" y="565" width="6" height="4" fill="#3c3c3c"/><rect x="867" y="565" width="6" height="4" fill="#3c3c3c"/><rect x="133" y="547" width="9.5" height="20" fill="#8f9aa1"/><circle cx="136.5" cy="569.5" r="5.5" fill="#9aa7b0" stroke="#3c3c3c" stroke-width="1.5"/><rect x="145" y="547" width="16" height="5" fill="#9aa7b0"/><g fill="#9aa7b0"><rect x="145" y="556.5" width="6" height="2.2"/><rect x="145" y="562.5" width="6" height="2.2"/><rect x="145" y="568.5" width="6" height="2.2"/></g><circle cx="156.8" cy="558.8" r="6.2" fill="#f0a732" stroke="#3c3c3c" stroke-width="1.5"/><circle cx="156.8" cy="558.8" r="1.8" fill="#3c3c3c"/><path d="M155 563 L155 574.5 L158.7 574.5 L158.7 571.5 L162.5 571.5 L162.5 568.7 L158.7 568.7 L158.7 563 Z" fill="#f0a732"/><path d="M222 557.3 L227.2 551 L232.4 557.3 Z M222 561 L227.2 567.3 L232.4 561 Z" fill="#afb1b3"/><path d="M563.8 557.3 L569.0 551 L574.1999999999999 557.3 Z M563.8 561 L569.0 567.3 L574.1999999999999 561 Z" fill="#afb1b3"/><path d="M810 557.3 L815.2 551 L820.4 557.3 Z M810 561 L815.2 567.3 L820.4 561 Z" fill="#afb1b3"/><path d="M1151.8 557.3 L1157.0 551 L1162.2 557.3 Z M1151.8 561 L1157.0 567.3 L1162.2 561 Z" fill="#afb1b3"/></svg>
</body></html>
